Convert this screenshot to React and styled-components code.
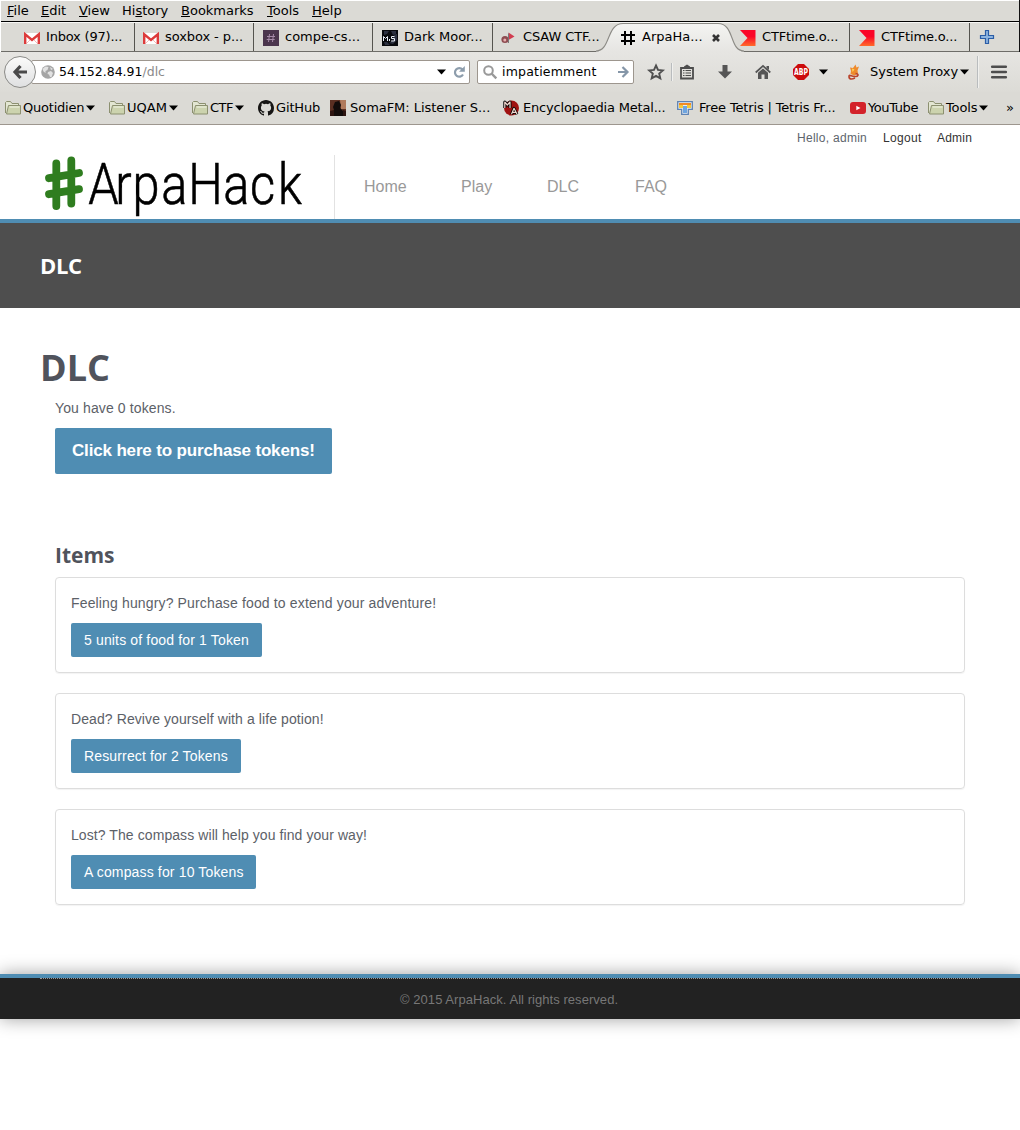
import React from "react";
import styled, { createGlobalStyle } from "styled-components";

const Global = createGlobalStyle`
  * { box-sizing: border-box; }
  body { margin: 0; background: #fff; }
  svg { display: block; flex: none; overflow: visible; }
`;

const UI = `"DejaVu Sans", sans-serif`;
const SANS = `"Liberation Sans", Arial, sans-serif`;
const HEAD = `"Open Sans", sans-serif`;

/* ---------- browser chrome ---------- */
const Chrome = styled.div`
  height: 125px;
  background: #dbdad5;
  border-bottom: 1px solid #9d968e;
  font: 13px/16px ${UI};
  color: #000;
`;
const Upper = styled.div`
  height: 52px;
  border-right: 1px solid #111;
  border-left: 1px solid #fff;
`;
const MenuBar = styled.div`
  height: 22px;
  display: flex;
  padding: 2px 0 0 6px;
  border-top: 1px solid #fff;
  border-bottom: 1px solid #000;
`;
const MenuItem = styled.span`
  width: ${(p) => p.$w}px;
  white-space: nowrap;
`;
const TabStrip = styled.div`
  height: 30px;
  display: flex;
  padding-left: 14px;
  border-top: 1px solid #f6f6f4;
  border-bottom: 1px solid #6e6d69;
`;
const TabCell = styled.div`
  position: relative;
  width: ${(p) => p.$w}px;
  height: 28px;
  display: flex;
  flex: none;
  padding: 6px 0 0 ${(p) => p.$pad || 9}px;
  border-right: 1px solid ${(p) => (p.$sep ? "#55544f" : "transparent")};
`;
const TabIcon = styled.span`
  position: relative;
  width: 22px;
  padding-top: 1px;
  flex: none;
`;
const TabText = styled.span`
  position: relative;
  white-space: nowrap;
  letter-spacing: ${(p) => p.$ls || 0}px;
  width: ${(p) => p.$w || "auto"};
`;
const TabShape = styled.svg`
  position: absolute;
  left: -20px;
  top: -1px;
`;
const CloseSlot = styled.span`
  position: relative;
  padding-top: 5px;
`;
const NavBar = styled.div`
  height: 40px;
  display: flex;
  align-items: center;
  padding-left: 4px;
  background: linear-gradient(#e6e5e2, #dcdbd6);
`;
const BackButton = styled.div`
  position: relative;
  z-index: 1;
  width: 32px;
  height: 32px;
  margin-right: -5px;
  border: 1px solid #8b8b88;
  border-radius: 50%;
  background: linear-gradient(#fbfbfa, #dfe0e1);
  display: flex;
  align-items: center;
  justify-content: center;
`;
const Field = styled.div`
  width: ${(p) => p.$w}px;
  height: 24px;
  display: flex;
  align-items: center;
  background: #fff;
  border: 1px solid #9d968e;
  border-radius: 2px;
  padding: 0 4px 0 ${(p) => p.$pad}px;
  margin-right: ${(p) => p.$mr}px;
  font-size: 12.5px;
`;
const FieldText = styled.span`
  flex: 1;
  white-space: nowrap;
  padding-left: ${(p) => p.$pad}px;
  letter-spacing: ${(p) => p.$ls || 0}px;
`;
const Dim = styled.span`
  color: #8a8a8a;
`;
const Slot = styled.span`
  width: ${(p) => p.$w}px;
  display: flex;
  flex: none;
  white-space: nowrap;
`;
const Rule = styled.span`
  width: 2px;
  height: ${(p) => p.$h}px;
  margin-right: ${(p) => p.$mr}px;
  background: #b9bcbe;
  border-right: 1px solid #f0f0ee;
`;
const Bookmarks = styled.div`
  display: flex;
  height: 32px;
  padding: 8px 0 0 5px;
`;
const Bookmark = styled.div`
  width: ${(p) => p.$w}px;
  flex: none;
  display: flex;
  gap: ${(p) => p.$gap || 2}px;
  white-space: nowrap;
  letter-spacing: ${(p) => p.$ls || 0}px;
`;

/* ---------- page ---------- */
const Page = styled.div`
  min-height: 1005px;
  font: 14px/20px ${SANS};
  color: #5c6168;
`;
const Header = styled.header`
  height: 98px;
  border-bottom: 4px solid #4f8db3;
  padding: 0 48px 0 40px;
`;
const UserBar = styled.div`
  height: 30px;
  display: flex;
  justify-content: flex-end;
  gap: 15px;
  padding-top: 3px;
  font-size: 12px;
`;
const UserItem = styled.span`
  color: ${(p) => (p.$link ? "#333" : "#5d646c")};
  width: ${(p) => p.$w}px;
  white-space: nowrap;
  letter-spacing: ${(p) => p.$ls}px;
`;
const BrandRow = styled.div`
  display: flex;
  height: 64px;
`;
const Brand = styled.div`
  width: 295px;
  border-right: 1px solid #e2e2e2;
`;
const Nav = styled.nav`
  display: flex;
  padding: 22px 0 0 29px;
  font-size: 16px;
  color: #999;
`;
const NavLink = styled.a`
  width: ${(p) => p.$w}px;
`;
const Band = styled.div`
  height: 85px;
  background: #4e4e4e;
  padding: 27px 40px;
  color: #fff;
  font: bold 22px/30px ${HEAD};
  letter-spacing: -0.3px;
`;
const Main = styled.main`
  height: 666px;
  padding: 34px 40px 0;
`;
const Title = styled.h1`
  margin: 0;
  font: bold 36px/52px ${HEAD};
  color: #50535c;
`;
const Section = styled.section`
  padding: 0 15px;
`;
const Line = styled.p`
  margin: 0;
  padding: 4px 0 10px;
  letter-spacing: ${(p) => p.$ls || 0}px;
`;
const BigButton = styled.button`
  display: block;
  width: 277px;
  height: 46px;
  padding: 0 0 0 17px;
  border: 0;
  border-radius: 2px;
  background: #4f8db3;
  color: #fff;
  text-align: left;
  white-space: nowrap;
  font: bold 17px/24px ${SANS};
  letter-spacing: -0.16px;
`;
const SubTitle = styled.h2`
  margin: 66px 0 7px;
  font: bold 21px/30px ${HEAD};
  color: #50535c;
`;
const Card = styled.article`
  height: 96px;
  margin-bottom: 20px;
  padding: 11px 15px 0;
  border: 1px solid #ddd;
  border-radius: 4px;
  box-shadow: 0 1px 1px rgba(0, 0, 0, 0.05);
`;
const ItemButton = styled.button`
  display: block;
  width: ${(p) => p.$w}px;
  height: 34px;
  padding: 0 0 0 13px;
  border: 0;
  border-radius: 2px;
  background: #4f8db3;
  color: #fff;
  text-align: left;
  white-space: nowrap;
  font: 14px/20px ${SANS};
  letter-spacing: 0.15px;
`;
const Footer = styled.footer`
  height: 45px;
  padding: 0 40px;
  border-top: 4px solid #4f8db3;
  background: #222;
  box-shadow: 0 0 18px rgba(0, 0, 0, 0.38);
`;
const FooterInner = styled.div`
  border-top: 1px dotted #999;
  padding: 11px 0 0 360px;
  font-size: 13px;
  color: #777;
  letter-spacing: 0.05px;
`;

/* ---------- icons ---------- */
const Gmail = () => (
  <svg width="16" height="16" viewBox="0 0 16 16">
    <rect x="0" y="3" width="16" height="11" fill="#fff" />
    <path d="M2.500 13.500l4-4M13.500 13.500l-4-4" stroke="#f3b9b5" strokeWidth="1" />
    <path d="M1.200 14V4.300L8 10l6.800-5.700V14" fill="none" stroke="#dd3b3b" strokeWidth="2.400" />
  </svg>
);
const Slack = () => (
  <svg width="16" height="16" viewBox="0 0 16 16">
    <rect width="16" height="16" fill="#4b354d" />
    <path d="M6.500 4l-1 8M10.500 4l-1 8M4 6.500h8M3.700 9.500h8" stroke="#a68aa8" fill="none" />
  </svg>
);
const MoorIcon = () => (
  <svg width="16" height="16" viewBox="0 0 16 16">
    <rect width="16" height="16" fill="#08090d" />
    <path d="M2 1h5l-2 3-3 1zM9 1h5v3l-3 1zM2 12h3l3 3H3zM12 5l3-1v6l-4 4-4-1 3-2z" fill="#2c3040" />
    <path d="M1.500 11V6.500l2 2 2-2V11M12.500 6.500H9.500v2h3v2.500h-3.500M7.500 9v2" stroke="#e8edf5" fill="none" />
  </svg>
);
const Csaw = () => (
  <svg width="16" height="16" viewBox="0 0 16 16">
    <path d="M7.500 2.500l6 4-6 3.500z" fill="#d23d50" />
    <circle cx="4" cy="9.500" r="3.600" fill="#8d4b50" />
    <circle cx="3.800" cy="10" r="1.500" fill="#e8b0b0" />
    <path d="M7.500 3.500v9.500" stroke="#777" />
  </svg>
);
const HashIcon = () => (
  <svg width="16" height="16" viewBox="0 0 16 16">
    <path d="M5 1v14M11 1v14M1 5h14M1 11h14" stroke="#000" strokeWidth="2" />
  </svg>
);
const CtfTime = () => (
  <svg width="16" height="16" viewBox="0 0 16 16">
    <defs>
      <linearGradient id="ctf" gradientUnits="userSpaceOnUse" x1="0" y1="0" x2="0" y2="16">
        <stop offset="0.400" stopColor="#fb0528" />
        <stop offset="1" stopColor="#ff6a2a" />
      </linearGradient>
    </defs>
    <path d="M0 0h15.500v16H0l7.500-8z" fill="url(#ctf)" />
  </svg>
);
const Close = () => (
  <svg width="8" height="8" viewBox="0 0 8 8">
    <path d="M1 1l6 6M7 1L1 7" stroke="#333" strokeWidth="2.600" />
  </svg>
);
const Plus = () => (
  <svg width="14" height="14" viewBox="0 0 14 14">
    <path d="M5.500 .5h3v5h5v3h-5v5h-3v-5h-5v-3h5z" fill="#8db4e0" stroke="#2b5da6" strokeWidth="1.200" />
  </svg>
);
const Back = () => (
  <svg width="14" height="14" viewBox="0 0 14 14">
    <path d="M7.500 1L2 7l5.500 6M2 7h12" fill="none" stroke="#4a4a4a" strokeWidth="3.200" />
  </svg>
);
const Globe = () => (
  <svg width="14" height="14" viewBox="0 0 14 14">
    <circle cx="7" cy="7" r="6.800" fill="#a5a5a5" />
    <path d="M1.500 4l3-2.500 3 .5-1 3-2 1v2l-2-1.500zM7 7l3-1 2 2-1.500 4H9L8 9.500 6.500 9zM9 2l3 2-2 1z" fill="#e2e2e2" />
  </svg>
);
const Caret = () => (
  <svg width="9" height="16" viewBox="0 0 9 16">
    <path d="M0 5.500h9L4.500 10.500z" fill="#000" />
  </svg>
);
const Reload = () => (
  <svg width="12" height="12" viewBox="0 0 12 12">
    <path d="M9.500 3.500A4.300 4.300 0 1 0 10 8.500" fill="none" stroke="#8d9dac" strokeWidth="2.200" />
    <path d="M11.800 0v5.800H6z" fill="#8d9dac" />
  </svg>
);
const Search = () => (
  <svg width="14" height="14" viewBox="0 0 14 14">
    <circle cx="5.500" cy="5.500" r="4.300" fill="none" stroke="#999" strokeWidth="2" />
    <path d="M8.500 8.500l4.800 4.800" stroke="#999" strokeWidth="2.400" />
  </svg>
);
const Go = () => (
  <svg width="11" height="12" viewBox="0 0 11 12">
    <path d="M0 6h9M4.500 1l5 5-5 5" fill="none" stroke="#8596a8" strokeWidth="2.200" />
  </svg>
);
const Star = () => (
  <svg width="16" height="16" viewBox="0 0 16 16">
    <path d="M8 1.500l2 4.400 4.800.5-3.600 3.200 1.100 4.800L8 11.900l-4.300 2.500 1.100-4.800L1.200 6.400 6 5.900z" fill="none" stroke="#505050" strokeWidth="1.900" />
  </svg>
);
const Clip = () => (
  <svg width="14" height="16" viewBox="0 0 14 16">
    <path d="M1 4h12v10.500H1z" fill="none" stroke="#4d4d4d" strokeWidth="1.800" />
    <path d="M4 4V2.500L7 .5l3 2V4z" fill="#4d4d4d" />
    <path d="M3 6.500h1.500M5.500 6.500H11M3 9h1.500M5.500 9H11M3 11.500h1.500M5.500 11.500H11" stroke="#4d4d4d" strokeWidth="1.200" />
  </svg>
);
const Down = () => (
  <svg width="14" height="16" viewBox="0 0 14 16">
    <path d="M4.500 1h5v6.500H14l-7 7-7-7h4.500z" fill="#555" />
  </svg>
);
const HomeIcon = () => (
  <svg width="16" height="16" viewBox="0 0 16 16">
    <path d="M.7 8.500L8 1.800l7.300 6.700" fill="none" stroke="#555" strokeWidth="1.700" />
    <path d="M11.500 2H14v4l-2.500-2z" fill="#555" />
    <path d="M3 8.700L8 4.400l5 4.300V15H9.500v-4.500h-3V15H3z" fill="#555" />
  </svg>
);
const Abp = () => (
  <svg width="17" height="16" viewBox="0 0 17 16">
    <path d="M5.500 0h6l5 5v6l-5 5h-6l-5-5V5z" transform="translate(.5 0)" fill="#cc0c0c" />
    <text x="9" y="11" fill="#fff" fontFamily="DejaVu Sans" fontSize="8" fontWeight="bold" textAnchor="middle" textLength="14" lengthAdjust="spacingAndGlyphs">ABP</text>
  </svg>
);
const Fox = () => (
  <svg width="14" height="16" viewBox="0 0 14 16">
    <path d="M3 3.500l3 .5 2.500-3.500 1 3 2.500-1-1.500 4 .5 3-3.500 2-4-1.500.5-3z" fill="#ee8a2d" />
    <path d="M5 4.500l2.500 1L5.500 8z" fill="#ffd75a" />
    <path d="M8.500 9.500c4 0 3 3.500-1 3S1.500 10 2 13s4 2 6 1" fill="none" stroke="#b9442c" strokeWidth="1.600" />
  </svg>
);
const Burger = () => (
  <svg width="16" height="14" viewBox="0 0 16 14">
    <path d="M1.200 1.800h13.600M1.200 7h13.600M1.200 12.200h13.600" stroke="#4d4d4d" strokeWidth="2.600" strokeLinecap="round" />
  </svg>
);
const Folder = () => (
  <svg width="16" height="16" viewBox="0 0 16 16">
    <path d="M.5 13V2.500l1-1h4l1.500 2h6.500V6" fill="#e3e6d2" stroke="#8c9070" />
    <path d="M3.500 5.500h12v8.500H1.500z" fill="#ccd3ae" stroke="#8c9070" />
    <path d="M4.500 7h10" stroke="#f2f4e6" />
  </svg>
);
const Github = () => (
  <svg width="16" height="16" viewBox="0 0 16 16">
    <path fill="#161514" d="M8 0C3.580 0 0 3.580 0 8c0 3.540 2.290 6.530 5.470 7.590.4.070.550-.170.550-.380 0-.190-.010-.820-.010-1.490-2.010.370-2.530-.490-2.690-.940-.090-.230-.480-.940-.820-1.130-.280-.150-.680-.520-.010-.530.630-.010 1.080.580 1.230.820.720 1.210 1.870.870 2.330.660.070-.520.280-.870.510-1.070-1.780-.2-3.640-.890-3.640-3.950 0-.870.310-1.590.820-2.150-.080-.2-.360-1.020.080-2.120 0 0 .670-.210 2.200.820a7.600 7.600 0 0 1 4 0c1.530-1.040 2.200-.820 2.200-.820.440 1.100.160 1.920.080 2.120.510.560.820 1.270.820 2.150 0 3.070-1.870 3.750-3.650 3.950.290.250.540.730.540 1.480 0 1.070-.010 1.930-.010 2.200 0 .210.150.460.550.380A8.010 8.010 0 0 0 16 8c0-4.420-3.580-8-8-8z" />
  </svg>
);
const Soma = () => (
  <svg width="16" height="16" viewBox="0 0 16 16">
    <rect width="16" height="16" fill="#5b2f22" />
    <path d="M10 0h6v9h-5z" fill="#b07a5c" />
    <path d="M5 2l4-1 2 4-1 3 3 3 1 5H3l1-6-1-3z" fill="#130c0b" />
    <path d="M0 11l4-1v6H0zM13 10l3 1v5h-3z" fill="#2e1511" />
  </svg>
);
const Metal = () => (
  <svg width="16" height="16" viewBox="0 0 16 16">
    <circle cx="8.500" cy="8" r="7.500" fill="#a01111" />
    <g fill="none" strokeLinejoin="round">
      <path d="M1.800 8V2l2.500 3L7 2v6M8.500 14.300L11 8.300l3 6M9.500 12.300h4" stroke="#000" strokeWidth="3" />
      <path d="M1.800 8V2l2.500 3L7 2v6M8.500 14.300L11 8.300l3 6M9.500 12.300h4" stroke="#f0d5cd" strokeWidth="1.200" />
    </g>
  </svg>
);
const Tetris = () => (
  <svg width="16" height="16" viewBox="0 0 16 16">
    <path d="M.7 1.700h14.600v7.600h-4v5H4.700v-5h-4z" fill="#e9eef5" stroke="#5f83b3" strokeWidth="1.300" />
    <path d="M2 3h12v2H2z" fill="#f08a24" />
    <path d="M2 5h4v3H2zM10 5h4v3h-4z" fill="#f4c83c" />
    <path d="M6 6h4v7H6z" fill="#6fa5df" />
  </svg>
);
const YouTube = () => (
  <svg width="16" height="16" viewBox="0 0 16 16">
    <rect y="2" width="16" height="12" rx="3" fill="#d3222a" />
    <path d="M6.300 5.800v4.400L10.500 8z" fill="#fff" />
  </svg>
);

const LOGO_SCALE = 0.84;
const logoX = [88.200, 115.200, 132.500, 161.200, 188.200, 223.200, 250, 278]
  .map((x) => x / LOGO_SCALE)
  .join(" ");
const Logo = () => (
  <svg width="270" height="64" viewBox="40 155 270 64">
    <path d="M56.300 163.500V206M71.300 160.500v43M49 178.200l30-5.200M49 194.200l30-5" stroke="#2f7d1f" strokeWidth="7.800" strokeLinecap="round" />
    <text x={logoX} y="204" transform={`scale(${LOGO_SCALE} 1)`} fontFamily="Roboto, sans-serif" fontWeight="300" fontSize="58" fill="#000" stroke="#000" strokeWidth="0.600">ArpaHack</text>
  </svg>
);

const tabs = [
  { icon: <Gmail />, text: "Inbox (97)...", w: 120, sep: true, ls: -0.2 },
  { icon: <Gmail />, text: "soxbox - p...", w: 119, sep: true, pad: 8, ls: -0.08 },
  { icon: <Slack />, text: "compe-cs...", w: 119, sep: true },
  { icon: <MoorIcon />, text: "Dark Moor...", w: 120, sep: true },
  { icon: <Csaw />, text: "CSAW CTF...", w: 119, pad: 8, ls: -0.1 },
  { icon: <HashIcon />, text: "ArpaHa...", w: 119, active: true, pad: 8 },
  { icon: <CtfTime />, text: "CTFtime.o...", w: 119, sep: true, ls: -0.15 },
  { icon: <CtfTime />, text: "CTFtime.o...", w: 120, sep: true, ls: -0.15 },
];

const menu = [
  ["", "F", "ile", 34],
  ["", "E", "dit", 38],
  ["", "V", "iew", 43],
  ["Hi", "s", "tory", 59],
  ["", "B", "ookmarks", 86],
  ["", "T", "ools", 45],
  ["", "H", "elp", 40],
];

const marks = [
  { icon: <Folder />, text: "Quotidien", w: 104, caret: true, ls: -0.22 },
  { icon: <Folder />, text: "UQAM", w: 83, caret: true },
  { icon: <Folder />, text: "CTF", w: 66, caret: true, ls: -0.5 },
  { icon: <Github />, text: "GitHub", w: 72, ls: -0.15 },
  { icon: <Soma />, text: "SomaFM: Listener S...", w: 173, gap: 4, ls: -0.04 },
  { icon: <Metal />, text: "Encyclopaedia Metal...", w: 174, gap: 4, ls: -0.18 },
  { icon: <Tetris />, text: "Free Tetris | Tetris Fr...", w: 173, gap: 6, ls: -0.16 },
  { icon: <YouTube />, text: "YouTube", w: 78, ls: -0.4 },
  { icon: <Folder />, text: "Tools", w: 78, caret: true, ls: -0.15 },
];

const items = [
  { text: "Feeling hungry? Purchase food to extend your adventure!", label: "5 units of food for 1 Token", w: 191, ls: 0.145 },
  { text: "Dead? Revive yourself with a life potion!", label: "Resurrect for 2 Tokens", w: 170, ls: 0.09 },
  { text: "Lost? The compass will help you find your way!", label: "A compass for 10 Tokens", w: 185, ls: 0.08 },
];

function ActiveShape() {
  return (
    <TabShape width="152" height="30" viewBox="0 0 152 30">
      <defs>
        <linearGradient id="tab" x2="0" y2="1">
          <stop offset="0" stopColor="#f4f4f2" />
          <stop offset="1" stopColor="#e6e5e2" />
        </linearGradient>
      </defs>
      <path d="M4 29.500C19 29.500 14 1.500 31 1.500H126C143 1.500 137 29.500 152 29.500V30H4z" fill="url(#tab)" />
      <path d="M4 29C19 29 14 1.500 31 1.500H126C143 1.500 137 29 152 29" fill="none" stroke="#8c8b86" strokeWidth="1.200" />
    </TabShape>
  );
}

export default function App() {
  return (
    <>
      <Global />
      <Chrome>
        <Upper>
          <MenuBar>
            {menu.map(([a, b, c, w]) => (
              <MenuItem key={b + c} $w={w}>{a}<u>{b}</u>{c}</MenuItem>
            ))}
          </MenuBar>
          <TabStrip>
            {tabs.map((t, i) => (
              <TabCell key={i} $w={t.w} $pad={t.pad} $sep={t.sep}>
                {t.active && <ActiveShape />}
                <TabIcon>{t.icon}</TabIcon>
                <TabText $ls={t.ls} $w={t.active ? "70px" : undefined}>{t.text}</TabText>
                {t.active && <CloseSlot><Close /></CloseSlot>}
              </TabCell>
            ))}
            <TabCell $w={40} $pad={10}><TabIcon><Plus /></TabIcon></TabCell>
          </TabStrip>
        </Upper>
        <NavBar>
          <BackButton><Back /></BackButton>
          <Field $w={439} $pad={9} $mr={7}>
            <Globe />
            <FieldText $pad={4}>54.152.84.91<Dim>/dlc</Dim></FieldText>
            <Slot $w={16}><Caret /></Slot>
            <Reload />
          </Field>
          <Field $w={157} $pad={5} $mr={14}>
            <Search />
            <FieldText $pad={5} $ls={0.2}>impatiemment</FieldText>
            <Go />
          </Field>
          <Slot $w={23}><Star /></Slot>
          <Rule $h={18} $mr={7} />
          <Slot $w={38}><Clip /></Slot>
          <Slot $w={37}><Down /></Slot>
          <Slot $w={37}><HomeIcon /></Slot>
          <Slot $w={27}><Abp /></Slot>
          <Slot $w={28}><Caret /></Slot>
          <Slot $w={23}><Fox /></Slot>
          <Slot $w={90}>System Proxy</Slot>
          <Slot $w={17}><Caret /></Slot>
          <Rule $h={32} $mr={12} />
          <Burger />
        </NavBar>
        <Bookmarks>
          {marks.map((m) => (
            <Bookmark key={m.text} $w={m.w} $gap={m.gap} $ls={m.ls}>
              {m.icon}
              <span>{m.text}</span>
              {m.caret && <Caret />}
            </Bookmark>
          ))}
          <span>»</span>
        </Bookmarks>
      </Chrome>

      <Page>
        <Header>
          <UserBar>
            <UserItem $w={71} $ls={0.28}>Hello, admin</UserItem>
            <UserItem $link $w={39} $ls={0.35}>Logout</UserItem>
            <UserItem $link $w={35} $ls={0.2}>Admin</UserItem>
          </UserBar>
          <BrandRow>
            <Brand><Logo /></Brand>
            <Nav>
              <NavLink $w={97}>Home</NavLink>
              <NavLink $w={86}>Play</NavLink>
              <NavLink $w={88}>DLC</NavLink>
              <NavLink $w={40}>FAQ</NavLink>
            </Nav>
          </BrandRow>
        </Header>
        <Band>DLC</Band>
        <Main>
          <Title>DLC</Title>
          <Section>
            <Line $ls={0.12}>You have 0 tokens.</Line>
            <BigButton>Click here to purchase tokens!</BigButton>
            <SubTitle>Items</SubTitle>
            {items.map((it) => (
              <Card key={it.label}>
                <Line $ls={it.ls}>{it.text}</Line>
                <ItemButton $w={it.w}>{it.label}</ItemButton>
              </Card>
            ))}
          </Section>
        </Main>
        <Footer>
          <FooterInner>© 2015 ArpaHack. All rights reserved.</FooterInner>
        </Footer>
      </Page>
    </>
  );
}
